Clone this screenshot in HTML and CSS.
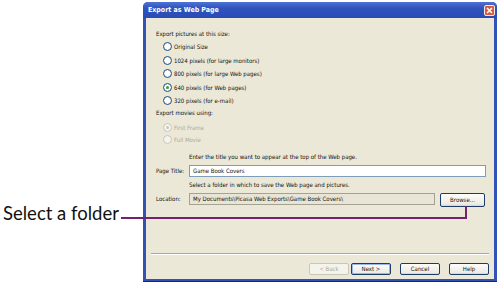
FILE: index.html
```html
<!DOCTYPE html>
<html>
  <head>
    <meta charset="utf-8">
    <title>Export as Web Page</title>
    <link rel="stylesheet" href="styles.css">
  </head>
  <body>
    <div class="stage">
      <!-- Callout label on the left -->
      <div class="callout">
        <span class="callout-text">Select a folder</span>
      </div>

      <!-- The dialog window -->
      <div class="window">
        <div class="titlebar">
          <span class="title">Export as Web Page</span>
          <span class="close">
            <svg width="7" height="7" viewBox="0 0 7 7"><path d="M1 1 L6 6 M6 1 L1 6" stroke="#fff" stroke-width="1.6"/></svg>
          </span>
        </div>

        <div class="dialog">
          <div class="content">
            <div class="section-label">Export pictures at this size:</div>
            <div class="radio-list">
              <div class="radio-row"><span class="radio"></span>Original Size</div>
              <div class="radio-row"><span class="radio"></span>1024 pixels (for large monitors)</div>
              <div class="radio-row"><span class="radio"></span>800 pixels (for large Web pages)</div>
              <div class="radio-row"><span class="radio checked"></span>640 pixels (for Web pages)</div>
              <div class="radio-row"><span class="radio"></span>320 pixels (for e-mail)</div>
            </div>

            <div class="section-label movies">Export movies using:</div>
            <div class="radio-list disabled">
              <div class="radio-row small"><span class="radio checked"></span>First Frame</div>
              <div class="radio-row small"><span class="radio"></span>Full Movie</div>
            </div>

            <div class="hint first">Enter the title you want to appear at the top of the Web page.</div>
            <div class="field-row">
              <span class="field-label">Page Title:</span>
              <div class="textbox wide">Game Book Covers</div>
            </div>

            <div class="hint">Select a folder in which to save the Web page and pictures.</div>
            <div class="field-row">
              <span class="field-label">Location:</span>
              <div class="textbox readonly">My Documents\Picasa Web Exports\Game Book Covers\</div>
              <button class="btn browse">Browse...</button>
            </div>
          </div>

          <!-- Wizard buttons -->
          <div class="footer">
            <button class="btn disabled">&lt; Back</button>
            <button class="btn default">Next &gt;</button>
            <button class="btn cancel">Cancel</button>
            <button class="btn help">Help</button>
          </div>
        </div>
      </div>

      <!-- Callout leader line drawn over the dialog -->
      <div class="leader-h"></div>
      <div class="leader-v"></div>
    </div>
  </body>
</html>
```

FILE: styles.css
```css
/* Basic reset */
body {
  margin: 0;
  padding: 0;
  background: #fff;
  font-family: "Liberation Sans", Arial, sans-serif;
}
.stage {
  position: relative;
  width: 500px;
  height: 284px;
  display: flex;
  overflow: hidden;
}
/* Left hand annotation */
.callout {
  width: 143px;
  flex: none;
  padding-top: 202px;
  box-sizing: border-box;
}
.callout-text {
  display: block;
  padding-left: 3px;
  font-family: Lato, "Open Sans", sans-serif;
  font-size: 18.5px;
  line-height: 22px;
  color: #111;
}
.leader-h {
  position: absolute;
  left: 121px;
  top: 217px;
  width: 346px;
  height: 2px;
  background: #74216f;
}
.leader-v {
  position: absolute;
  left: 465px;
  top: 206px;
  width: 2px;
  height: 13px;
  background: #74216f;
}
/* XP style window frame */
.window {
  width: 354px;
  height: 279px;
  margin-top: 2px;
  display: flex;
  flex-direction: column;
  background: #3352b6;
  border-radius: 5px 5px 0 0;
  border-bottom: 1px solid #1a226a;
}
.titlebar {
  height: 16px;
  flex: none;
  display: flex;
  align-items: center;
  justify-content: space-between;
  padding: 0 2px 0 5px;
  border-radius: 5px 5px 0 0;
  background: linear-gradient(#4e72d4, #2f52bd 40%, #2a4bb4);
}
.title {
  color: #fff;
  font-family: "DejaVu Sans", sans-serif;
  font-stretch: condensed;
  font-weight: bold;
  font-size: 7px;
}
.close {
  width: 11px;
  height: 11px;
  box-sizing: border-box;
  border: 1px solid #f2ece6;
  border-radius: 2px;
  background: #d6593b;
  display: flex;
  align-items: center;
  justify-content: center;
}
.close svg {
  display: block;
}
.dialog {
  flex: 1;
  margin: 0 3px 2px;
  background: #ebe8d7;
  display: flex;
  flex-direction: column;
  font-family: "DejaVu Sans", sans-serif;
  font-stretch: condensed;
  font-size: 6px;
  color: #111;
}
.content {
  padding: 10px 8px 0 10px;
}
.section-label {
  height: 12px;
  line-height: 12px;
}
.section-label.movies {
  height: 10px;
  line-height: 10px;
}
.radio-row {
  height: 13.5px;
  display: flex;
  align-items: center;
  padding-left: 7px;
}
.radio-row.small {
  height: 12px;
}
.disabled .radio-row {
  color: #aca899;
}
.radio-list.disabled {
  margin-top: 3.5px;
}
/* Radio circle */
.radio {
  width: 9px;
  height: 9px;
  box-sizing: border-box;
  border: 1px solid #1d5281;
  border-radius: 50%;
  background: radial-gradient(#fff 40%, #dcd9cb);
  margin-right: 2px;
  display: flex;
  align-items: center;
  justify-content: center;
}
.radio.checked::after {
  content: "";
  width: 3px;
  height: 3px;
  border-radius: 50%;
  background: #2aa12d;
}
.disabled .radio {
  border-color: #c9c7ba;
  background: #f4f3ee;
}
.disabled .radio.checked::after {
  background: #cac8bb;
}
.hint {
  height: 10px;
  line-height: 10px;
  margin-top: 3px;
  padding-left: 33px;
}
.hint.first {
  margin-top: 7px;
}
.field-row {
  display: flex;
  align-items: flex-start;
  margin-top: 3px;
}
.field-label {
  width: 33px;
  flex: none;
  line-height: 12px;
}
.textbox {
  height: 12px;
  box-sizing: border-box;
  border: 1px solid #7f9db9;
  background: #fff;
  line-height: 10px;
  padding-left: 3px;
  white-space: nowrap;
  overflow: hidden;
}
.textbox.wide {
  width: 297px;
}
.textbox.readonly {
  width: 246px;
  background: #e8e5d6;
  border-color: #a5a294;
}
/* XP buttons */
.btn {
  font-family: inherit;
  font-stretch: condensed;
  font-size: 6px;
  color: #111;
  height: 12px;
  width: 40px;
  padding: 0;
  box-sizing: border-box;
  border: 1px solid #1c3c6c;
  border-radius: 2px;
  background: linear-gradient(#fdfdfb, #ecebe4 85%, #d6d0c5);
  line-height: 10px;
}
.btn.browse {
  width: 45px;
  height: 14px;
  margin-left: 5px;
}
.btn.default {
  box-shadow: inset 0 0 0 1px #9bb7ec;
}
.btn.disabled {
  color: #aca899;
  border-color: #c9c7ba;
  background: #f5f4ea;
}
.footer {
  margin: auto 5px 0;
  border-top: 1px solid #aca899;
  box-shadow: inset 0 1px 0 #fff;
  padding: 9px 0 4px;
  display: flex;
  justify-content: flex-end;
  height: 26px;
  box-sizing: border-box;
}
.footer .btn {
  margin-left: 9px;
}
.footer .btn.default {
  margin-left: 2px;
}
.footer .btn.help {
  margin-right: 0;
}
```
